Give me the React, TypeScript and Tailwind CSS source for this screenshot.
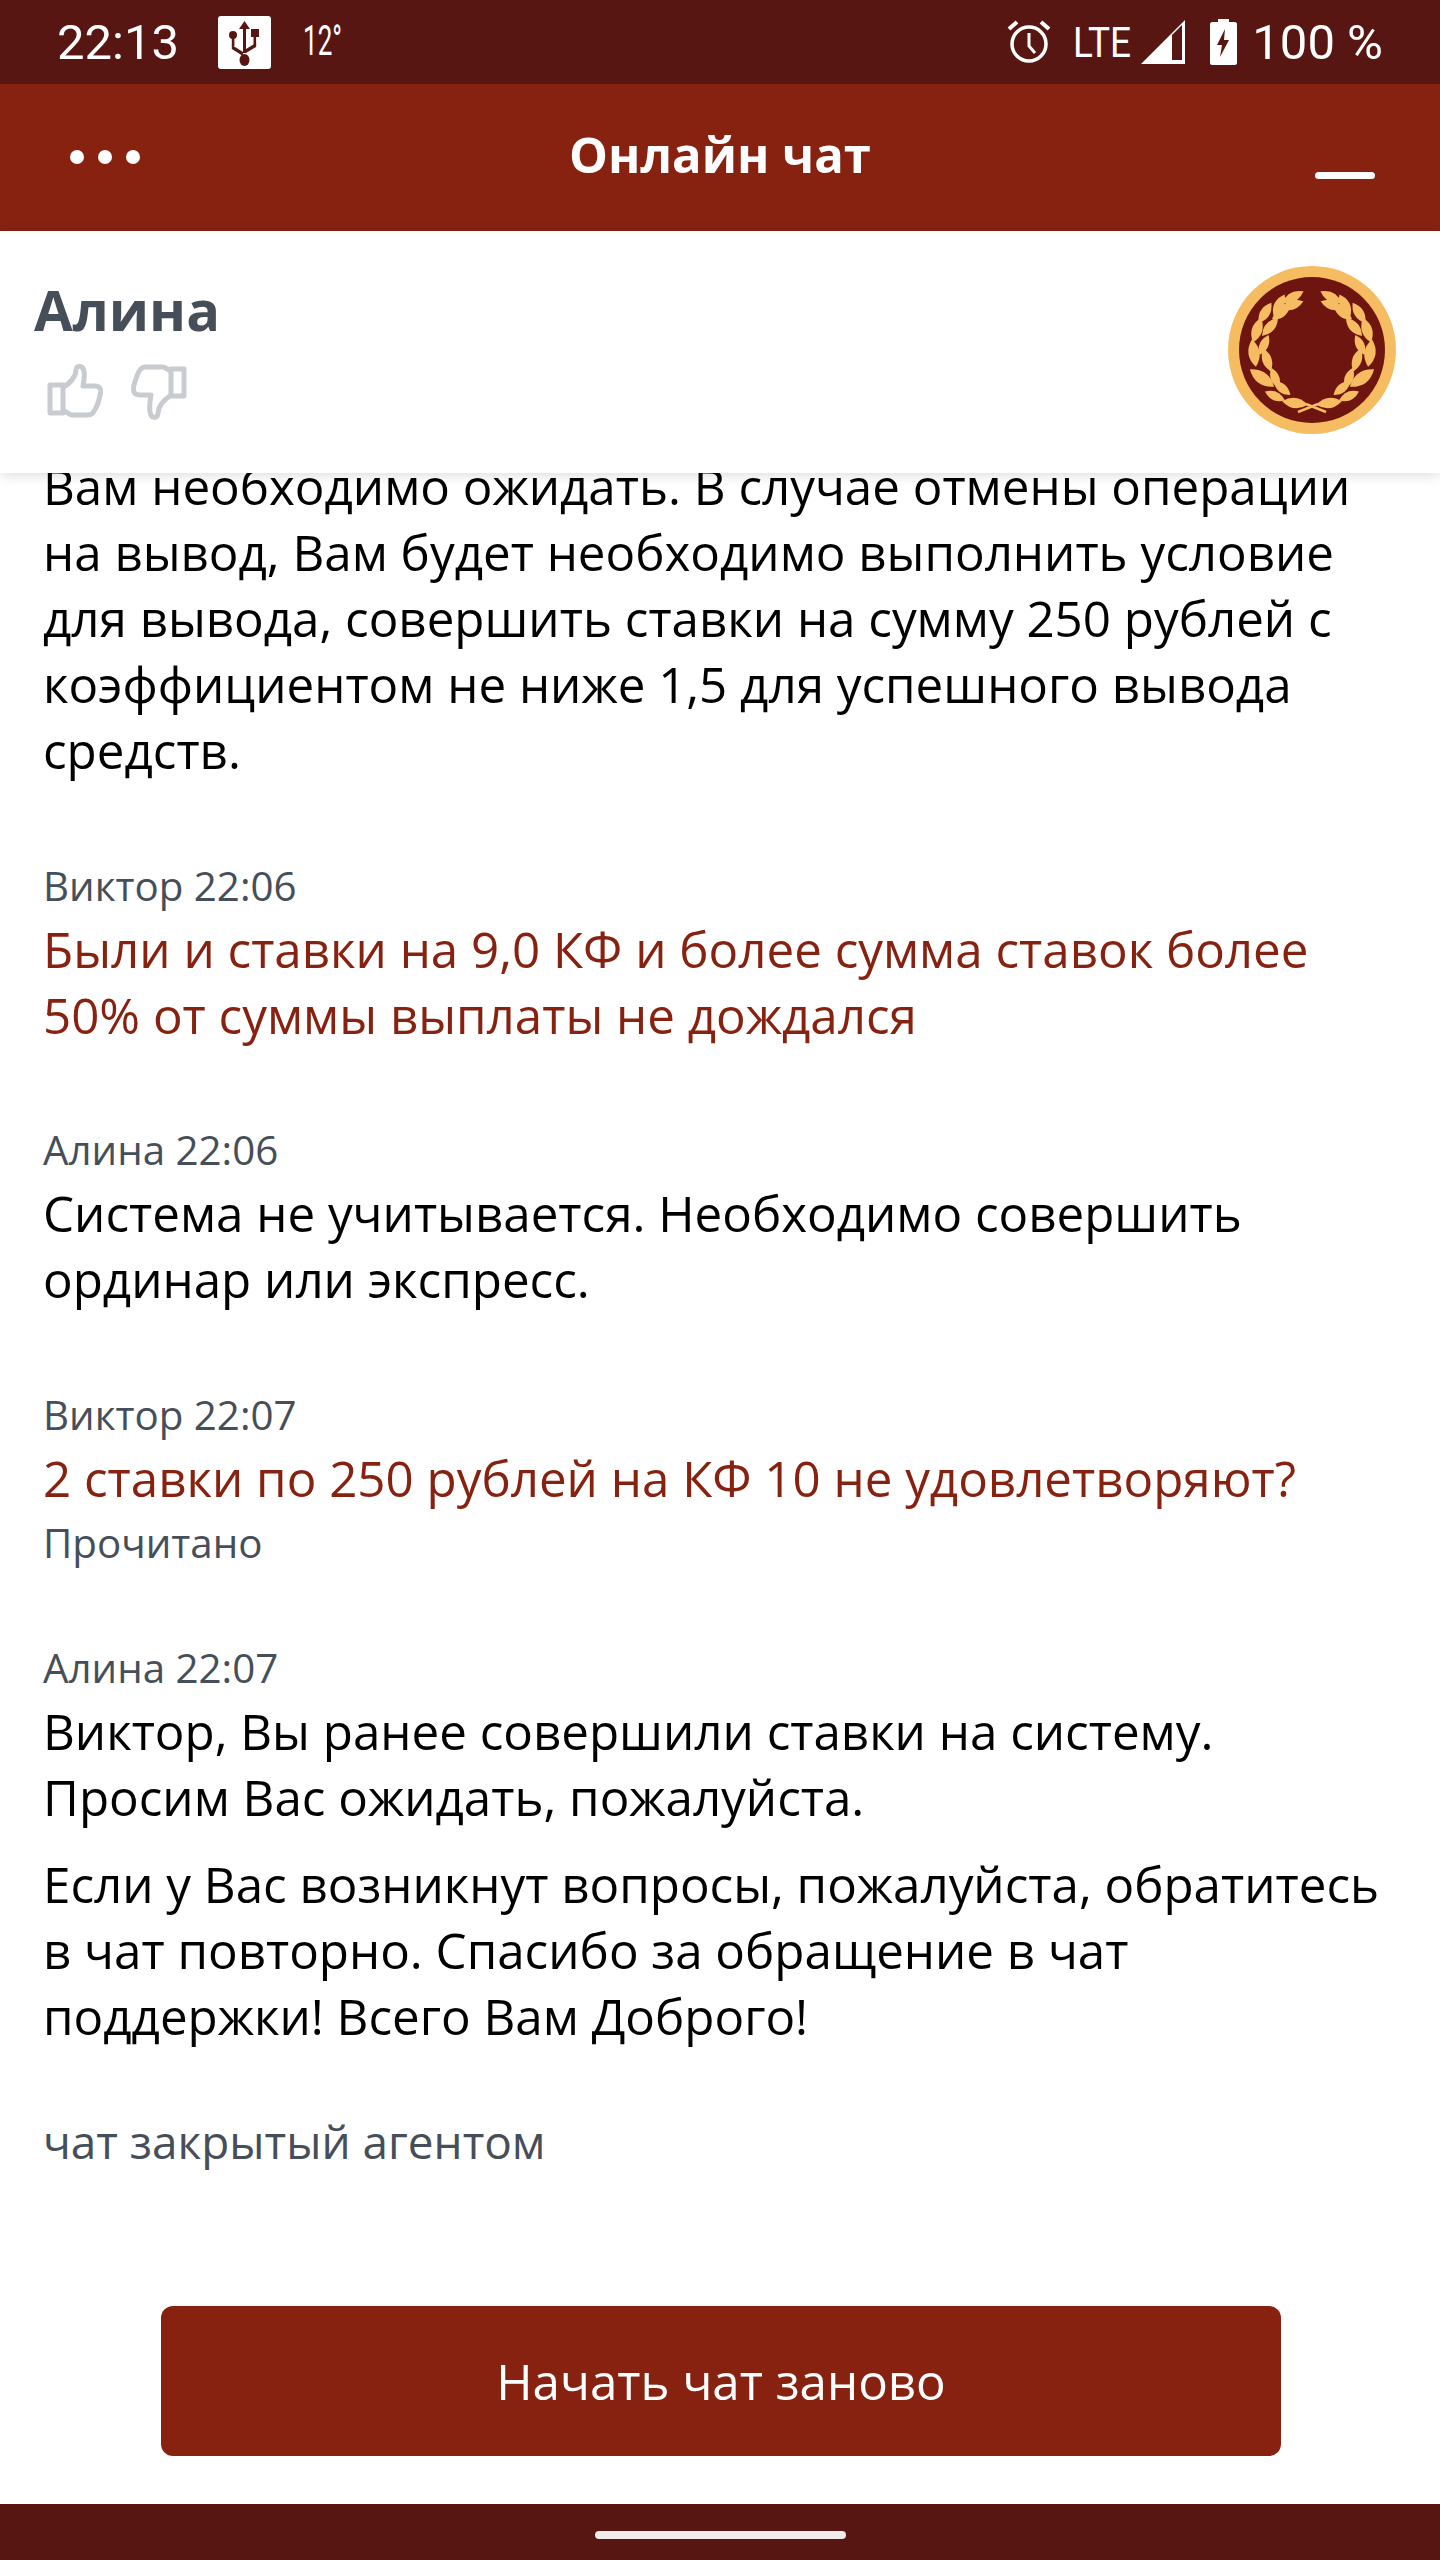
const leaves: [number, number, number, number][] = [
  [-17, 53, 8, 13],
  [-37, 46, 24, 11],
  [-30, 38, 40, 11],
  [-50, 28, 36, 15],
  [-37, 28, 70, 11],
  [-45, 10, 72, 12],
  [-58, 3, 82, 14],
  [-48, -5, -65, 11],
  [-55, -20, -72, 13],
  [-42, -23, -48, 12],
  [-47, -37, -58, 12],
  [-33, -45, -62, 12],
  [-31, -37, -35, 11],
  [-19, -53, -28, 12],
  [-20, -45, -18, 12],
]

function Wreath() {
  return (
    <svg width="170" height="170" viewBox="-85 -85 170 170">
      <circle r="84" fill="#f5bc62" />
      <circle r="73" fill="#6f1510" />
      {[1, -1].map((side) => (
        <g key={side} transform={`scale(${side} 1)`}>
          {leaves.map(([x, y, r, l], i) => (
            <path
              key={i}
              transform={`translate(${x} ${y}) rotate(${r})`}
              d={`M${-l} 0Q0 ${-l * 0.8} ${l} 0Q0 ${l * 0.8} ${-l} 0Z`}
              fill="#f5bc62"
            />
          ))}
          <path d="M14 62L-6 54" fill="none" stroke="#f5bc62" strokeWidth="2.5" />
        </g>
      ))}
    </svg>
  )
}

function ThumbUp() {
  return (
    <svg width="56" height="54" viewBox="0 0 56 54" fill="none" stroke="#c8ccd0" strokeWidth="5" strokeLinejoin="round" strokeLinecap="round">
      <path d="M3 21H16V49H3Z" />
      <path d="M16 23C23 20 29 12 29 6C29 1 36 1 37 7C38 12 37 17 36 22H48C53 22 55 26 53 31C52 37 50 43 47 47C46 50 44 51 41 51H25C22 51 20 47 16 47" />
    </svg>
  )
}

function ThumbDown() {
  return (
    <svg width="56" height="56" viewBox="0 0 56 56" fill="none" stroke="#c8ccd0" strokeWidth="5" strokeLinejoin="round" strokeLinecap="round">
      <path d="M53 5H40V32H53Z" />
      <path d="M40 7C36 6 35 3 31 3H14C10 3 8 6 6 12C4 18 1 24 3 28C4 31 7 31 10 31H20C19 37 18 42 19 48C20 55 27 55 27 49C27 42 33 36 40 31" />
    </svg>
  )
}

function Name({ children }: { children: React.ReactNode }) {
  return <p className="text-[40.3px] leading-[56px] mb-[2px] text-[#464f59]">{children}</p>
}

function Msg({ children, red }: { children: React.ReactNode; red?: boolean }) {
  return <p className={'text-[49.3px] leading-[66px] ' + (red ? 'text-[#872211]' : 'text-black')}>{children}</p>
}

export default function App() {
  return (
    <div className="w-[1440px] h-[2560px] flex flex-col bg-white overflow-hidden font-['Open_Sans',sans-serif]">
      {/* status bar */}
      <div className="h-[84px] shrink-0 bg-[#581612] flex items-center justify-between pl-[57px] pr-[57px] text-white font-['Roboto',sans-serif]">
        <div className="flex items-center">
          <span className="text-[49px] leading-none">22:13</span>
          <svg className="ml-[39px]" width="53" height="53" viewBox="0 0 53 53">
            <rect width="53" height="53" rx="3" fill="#fff" />
            <g fill="#581612">
              <path d="M26.5 5L32 13H28V37H25V13H21Z" />
              <circle cx="15" cy="19" r="4" />
              <rect x="13.8" y="20" width="2.6" height="10" />
              <path d="M13.8 29L25 36V40L13.8 33Z" />
              <rect x="33" y="13" width="8" height="8" />
              <rect x="35.5" y="20" width="2.6" height="10" />
              <path d="M38.1 27L28 33V37L38.1 31Z" />
              <ellipse cx="26.5" cy="44" rx="5" ry="6" />
            </g>
          </svg>
          <span className="ml-[32px] text-[42px] leading-none inline-block w-[36px] scale-x-[0.62] origin-left -translate-y-[1px]">12°</span>
        </div>
        <div className="flex items-center">
          <svg width="46" height="44" viewBox="0 0 44 44" fill="none" stroke="#fff">
            <circle cx="22" cy="24" r="17" strokeWidth="3.5" />
            <path d="M22 13V26L28 33" strokeWidth="3" />
            <path d="M2 9L10 2M42 9L34 2" strokeWidth="4" />
          </svg>
          <span className="ml-[21px] text-[43px] leading-none inline-block w-[60px] scale-x-[0.86] origin-left">LTE</span>
          <svg className="ml-[8px]" width="44" height="44" viewBox="0 0 44 44">
            <path d="M44 0V44H0Z" fill="#fff" />
            <path d="M31 15L41 5V40H31Z" fill="#581612" />
          </svg>
          <svg className="ml-[25px]" width="27" height="46" viewBox="0 0 27 46">
            <path d="M8 0H19V3H25C26 3 27 4 27 5V44C27 45 26 46 25 46H2C1 46 0 45 0 44V5C0 4 1 3 2 3H8Z" fill="#fff" />
            <path d="M15 10L7 26H12L10 38L19 21H14Z" fill="#581612" />
          </svg>
          <span className="ml-[15px] text-[49px] leading-none whitespace-nowrap">100 %</span>
        </div>
      </div>

      {/* header */}
      <div className="h-[147px] shrink-0 bg-[#872211] relative flex items-center justify-center">
        <div className="absolute left-[70px] top-[66px] flex gap-[14px]">
          <span className="w-[14px] h-[14px] rounded-full bg-white" />
          <span className="w-[14px] h-[14px] rounded-full bg-white" />
          <span className="w-[14px] h-[14px] rounded-full bg-white" />
        </div>
        <h1 className="text-[49px] leading-none font-bold text-white -translate-y-[3px]">Онлайн чат</h1>
        <span className="absolute left-[1315px] top-[88px] w-[60px] h-[7px] rounded-full bg-white" />
      </div>

      {/* agent */}
      <div className="h-[242px] shrink-0 bg-white relative z-10 shadow-[0_2px_12px_rgba(0,0,0,0.14)] flex justify-between pl-[34px] pr-[43px]">
        <div>
          <p className="text-[56px] leading-[70px] font-bold text-[#464f59] mt-[43px]">Алина</p>
          <div className="flex mt-[20px] ml-[13px] gap-[28px]">
            <ThumbUp />
            <ThumbDown />
          </div>
        </div>
        <div className="mt-[34px]">
          <Wreath />
        </div>
      </div>

      {/* messages */}
      <div className="flex-1 min-h-0 overflow-hidden pl-[43px] pr-[41px] flex flex-col">
        <div className="-mt-[20px]">
          <Msg>
            Вам необходимо ожидать. В случае отмены операции на вывод, Вам будет необходимо выполнить условие для вывода, совершить ставки на сумму 250 рублей с коэффициентом не ниже 1,5 для успешного вывода средств.
          </Msg>
        </div>
        <div className="mt-[75px]">
          <Name>Виктор 22:06</Name>
          <Msg red>Были и ставки на 9,0 КФ и более сумма ставок более 50% от суммы выплаты не дождался</Msg>
        </div>
        <div className="mt-[74px]">
          <Name>Алина 22:06</Name>
          <Msg>Система не учитывается. Необходимо совершить ординар или экспресс.</Msg>
        </div>
        <div className="mt-[75px]">
          <Name>Виктор 22:07</Name>
          <Msg red>2 ставки по 250 рублей на КФ 10 не удовлетворяют?</Msg>
          <p className="text-[40.3px] leading-[64px] text-[#464f59]">Прочитано</p>
        </div>
        <div className="mt-[65px]">
          <Name>Алина 22:07</Name>
          <Msg>Виктор, Вы ранее совершили ставки на систему. Просим Вас ожидать, пожалуйста.</Msg>
          <div className="mt-[21px]">
            <Msg>Если у Вас возникнут вопросы, пожалуйста, обратитесь в чат повторно. Спасибо за обращение в чат поддержки! Всего Вам Доброго!</Msg>
          </div>
        </div>
        <p className="mt-[62px] text-[45.9px] leading-[60px] text-[#464f59]">чат закрытый агентом</p>
      </div>

      {/* restart */}
      <div className="shrink-0 flex justify-center pl-[2px] pb-[48px]">
        <button className="w-[1120px] h-[150px] rounded-[12px] bg-[#872211] text-white text-[49.3px]">Начать чат заново</button>
      </div>

      {/* nav bar */}
      <div className="h-[56px] shrink-0 bg-[#581612] flex justify-center pt-[27px]">
        <span className="w-[251px] h-[8px] rounded-full bg-[#f0eceb]" />
      </div>
    </div>
  )
}
